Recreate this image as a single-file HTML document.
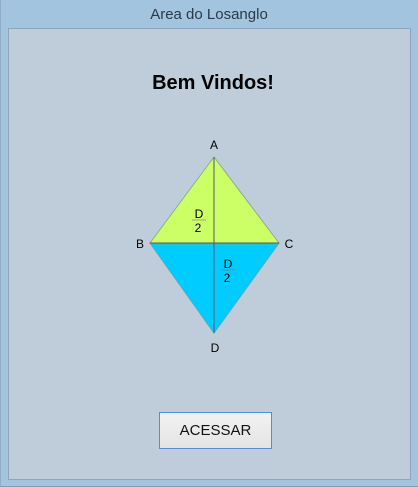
<!DOCTYPE html>
<html><head><style>
body{margin:0;width:418px;height:487px;overflow:hidden;background:#a2c4df;font-family:"Liberation Sans",sans-serif;position:relative}
.frame{position:absolute;left:0;top:0;width:417px;height:486px;border-right:1px solid #7f9db8;border-bottom:1px solid #7f9db8;border-left:1px solid #8faccb}
.title{position:absolute;top:6px;left:0;width:418px;text-align:center;font-size:15px;color:#2a3a4a}
.panel{position:absolute;left:8px;top:28px;width:401px;height:450px;background:#bfcddb;border:1px solid #8aa6c0}
h1{position:absolute;top:72px;left:4px;width:418px;text-align:center;font-size:20px;font-weight:bold;margin:0;color:#000}
.btn{position:absolute;left:159px;top:412px;width:111px;height:35px;border:1px solid #4f8fd6;background:linear-gradient(#f2f2f2,#e4e4e4);font-size:15px;text-align:center;line-height:35px;color:#111}
</style></head><body>
<div class="frame"></div>
<div class="title">Area do Losanglo</div>
<div class="panel"></div>
<h1>Bem Vindos!</h1>
<svg style="position:absolute;left:0;top:0" width="418" height="487" font-family="Liberation Sans, sans-serif" font-size="12">
<polygon points="214,157 150,243 279,243" fill="#ccff66" stroke="#8fb36b" stroke-width="1"/>
<polygon points="150,243 279,243 214,333" fill="#00ccff" stroke="#6aa0b0" stroke-width="1"/>
<line x1="214" y1="157" x2="214" y2="333" stroke="#557" stroke-width="1"/>
<line x1="150" y1="243" x2="279" y2="243" stroke="#557" stroke-width="1"/>
<text x="214" y="149" text-anchor="middle">A</text>
<text x="140" y="248" text-anchor="middle">B</text>
<text x="289" y="248" text-anchor="middle">C</text>
<text x="215" y="352" text-anchor="middle">D</text>
<text x="199" y="218" text-anchor="middle">D</text>
<line x1="192" y1="220" x2="206" y2="220" stroke="#777" stroke-width="0.6"/>
<text x="198" y="232" text-anchor="middle">2</text>
<text x="228" y="268" text-anchor="middle">D</text>
<line x1="221" y1="270" x2="235" y2="270" stroke="#777" stroke-width="0.6"/>
<text x="227" y="282" text-anchor="middle">2</text>
</svg>
<div class="btn">ACESSAR</div>
</body></html>
